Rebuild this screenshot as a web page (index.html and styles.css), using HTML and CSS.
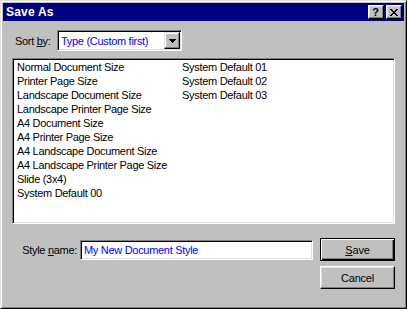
FILE: index.html
```html
<!DOCTYPE html>
<html lang="en">

<head>
    <meta charset="UTF-8">
    <title>Save As</title>
    <link rel="stylesheet" href="styles.css">
</head>

<body>

    <div class="window">
        <div class="titlebar">
            <span class="title">Save As</span>
            <div class="caption-buttons">
                <button class="caption-btn help-btn">?</button>
                <button class="caption-btn close-btn">
                    <svg width="8" height="7" viewBox="0 0 8 7">
                        <path d="M0 0h2v1h-2zM6 0h2v1h-2zM1 1h2v1h-2zM5 1h2v1h-2zM2 2h4v1h-4zM3 3h2v1h-2zM2 4h4v1h-4zM1 5h2v1h-2zM5 5h2v1h-2zM0 6h2v1h-2zM6 6h2v1h-2z" fill="#000"/>
                    </svg>
                </button>
            </div>
        </div>

        <div class="content">
            <div class="sort-row">
                <span class="sort-label">Sort <u>b</u>y:</span>
                <div class="combo">
                    <span class="combo-text">Type (Custom first)</span>
                    <span class="combo-btn">
                        <svg width="7" height="4" viewBox="0 0 7 4">
                            <path d="M0 0h7v1h-1v1h-1v1h-1v1h-1v-1h-1v-1h-1v-1h-1z" fill="#000"/>
                        </svg>
                    </span>
                </div>
            </div>

            <ul class="listbox">
                <li>Normal Document Size</li>
                <li>Printer Page Size</li>
                <li>Landscape Document Size</li>
                <li>Landscape Printer Page Size</li>
                <li>A4 Document Size</li>
                <li>A4 Printer Page Size</li>
                <li>A4 Landscape Document Size</li>
                <li>A4 Landscape Printer Page Size</li>
                <li>Slide (3x4)</li>
                <li>System Default 00</li>
                <li>System Default 01</li>
                <li>System Default 02</li>
                <li>System Default 03</li>
            </ul>

            <div class="bottom-row">
                <div class="name-row">
                    <label class="name-label" for="styleName">Style <u>n</u>ame:</label>
                    <input type="text" id="styleName" class="name-input" value="My New Document Style">
                </div>
                <div class="button-col">
                    <button class="btn btn-default"><u>S</u>ave</button>
                    <button class="btn">Cancel</button>
                </div>
            </div>
        </div>
    </div>

</body>

</html>
```

FILE: styles.css
```css
body {
    margin: 0;
    font-family: 'Liberation Sans', Arial, sans-serif;
    font-size: 11px;
    background-color: #c0c0c0;
}

.window {
    box-sizing: border-box;
    width: 407px;
    height: 309px;
    padding: 2px;
    background-color: #c0c0c0;
    border: 1px solid;
    border-color: #dfdfdf #000 #000 #dfdfdf;
    box-shadow: inset 1px 1px #fff, inset -1px -1px #808080;
}

.titlebar {
    height: 18px;
    background-color: #000080;
    display: flex;
    align-items: center;
    justify-content: space-between;
    padding: 0 2px 0 3px;
}

.title {
    color: white;
    font-weight: bold;
    font-size: 12px;
    letter-spacing: 0.2px;
}

.caption-buttons {
    display: flex;
    gap: 2px;
}

.caption-btn {
    box-sizing: border-box;
    width: 16px;
    height: 14px;
    padding: 0;
    margin: 0;
    background-color: #c0c0c0;
    border: 1px solid;
    border-color: #fff #000 #000 #fff;
    box-shadow: inset -1px -1px #808080, inset 1px 1px #dfdfdf;
    display: flex;
    align-items: center;
    justify-content: center;
}

.help-btn {
    font-family: 'Liberation Sans', Arial, sans-serif;
    font-weight: bold;
    font-size: 11px;
    line-height: 10px;
    color: #000;
    padding-right: 1px;
}

.close-btn svg {
    display: block;
    margin-left: 0px;
}

.content {
    padding: 0 9px;
    letter-spacing: -0.3px;
}

.sort-row {
    display: flex;
    align-items: center;
    margin-top: 9px;
}

.sort-label {
    box-sizing: border-box;
    width: 45px;
    padding-left: 3px;
}

.combo {
    box-sizing: border-box;
    width: 125px;
    height: 21px;
    background-color: white;
    border: 1px solid;
    border-color: #808080 #fff #fff #808080;
    box-shadow: inset 1px 1px #000, inset -1px -1px #dfdfdf;
    padding: 1px;
    display: flex;
    align-items: center;
    justify-content: space-between;
}

.combo-text {
    color: #0000ff;
    padding-left: 2px;
}

.combo-btn {
    box-sizing: border-box;
    width: 16px;
    height: 17px;
    background-color: #c0c0c0;
    border: 1px solid;
    border-color: #dfdfdf #000 #000 #dfdfdf;
    box-shadow: inset -1px -1px #808080, inset 1px 1px #fff;
    display: flex;
    align-items: center;
    justify-content: center;
}

.combo-btn svg {
    display: block;
}

.listbox {
    box-sizing: border-box;
    list-style: none;
    margin: 7px 0 0;
    width: 383px;
    height: 166px;
    padding: 1px 0 0 4px;
    background-color: white;
    border: 1px solid;
    border-color: #808080 #fff #fff #808080;
    box-shadow: inset 1px 1px #000, inset -1px -1px #dfdfdf;
    display: grid;
    grid-auto-flow: column;
    grid-template-rows: repeat(10, 14px);
    grid-auto-columns: 165px;
}

.listbox li {
    line-height: 14px;
    white-space: nowrap;
}

.bottom-row {
    display: flex;
    gap: 7px;
    margin-top: 14px;
}

.name-row {
    display: flex;
    align-items: center;
    height: 23px;
}

.name-label {
    width: 65px;
    margin-right: 3px;
    text-align: right;
}

.name-input {
    box-sizing: border-box;
    width: 233px;
    height: 20px;
    margin: 1px 0 0;
    padding: 0 0 0 3px;
    font-family: 'Liberation Sans', Arial, sans-serif;
    font-size: 11px;
    letter-spacing: -0.3px;
    color: #0000ff;
    background-color: white;
    border: 1px solid;
    border-color: #808080 #fff #fff #808080;
    box-shadow: inset 1px 1px #000, inset -1px -1px #dfdfdf;
    outline: none;
}

.button-col {
    display: flex;
    flex-direction: column;
    gap: 5px;
}

.btn {
    box-sizing: border-box;
    width: 75px;
    height: 23px;
    margin: 0;
    padding: 0;
    font-family: 'Liberation Sans', Arial, sans-serif;
    font-size: 11px;
    letter-spacing: -0.2px;
    color: #000;
    background-color: #c0c0c0;
    border: 1px solid;
    border-color: #fff #000 #000 #fff;
    box-shadow: inset -1px -1px #808080, inset 1px 1px #dfdfdf;
}

.btn-default {
    border-color: #000;
    box-shadow: inset 1px 1px #fff, inset -1px -1px #000, inset -2px -2px #808080;
}
```
